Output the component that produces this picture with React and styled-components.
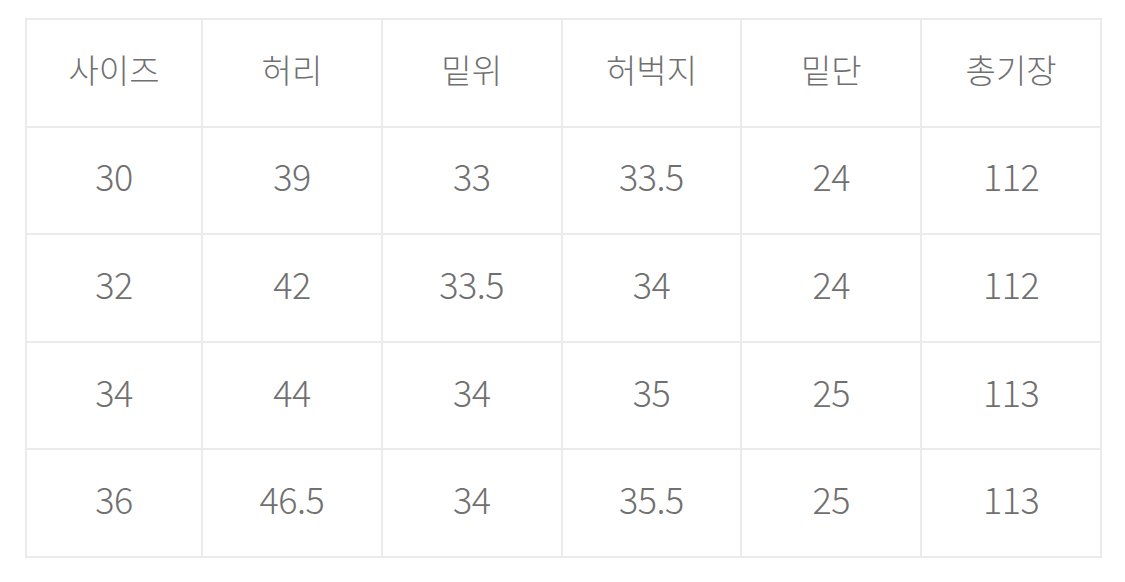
import React from "react";
import styled, { createGlobalStyle } from "styled-components";

const Global = createGlobalStyle`
  html, body { margin: 0; padding: 0; background: #fff; }
  body { font-family: "Noto Sans CJK KR", "Noto Sans", sans-serif; }
`;

const Page = styled.div`
  padding: 18px 0 0 25px;
`;

const Grid = styled.div`
  width: 1077px;
  box-sizing: border-box;
  display: grid;
  grid-template-columns: 176px repeat(5, 1fr);
  grid-auto-rows: 107.6px;
  border-top: 2px solid #ebebeb;
  border-left: 2px solid #ebebeb;
`;

const Cell = styled.div`
  box-sizing: border-box;
  border-right: 2px solid #ebebeb;
  border-bottom: 2px solid #ebebeb;
  display: flex;
  align-items: center;
  justify-content: center;
  padding-bottom: ${(p) => (p.$head ? "8px" : "10px")};
  font-size: ${(p) => (p.$head ? "33px" : "36px")};
  font-weight: 200;
  color: #707070;
  letter-spacing: ${(p) => (p.$head ? "0" : "-0.5px")};
`;

const head = ["사이즈", "허리", "밑위", "허벅지", "밑단", "총기장"];
const rows = [
  ["30", "39", "33", "33.5", "24", "112"],
  ["32", "42", "33.5", "34", "24", "112"],
  ["34", "44", "34", "35", "25", "113"],
  ["36", "46.5", "34", "35.5", "25", "113"],
];

export default function App() {
  return (
    <Page>
      <Global />
      <Grid>
        {head.map((h) => (
          <Cell key={h} $head>
            {h}
          </Cell>
        ))}
        {rows.map((r, i) => r.map((v, j) => <Cell key={`${i}-${j}`}>{v}</Cell>))}
      </Grid>
    </Page>
  );
}
